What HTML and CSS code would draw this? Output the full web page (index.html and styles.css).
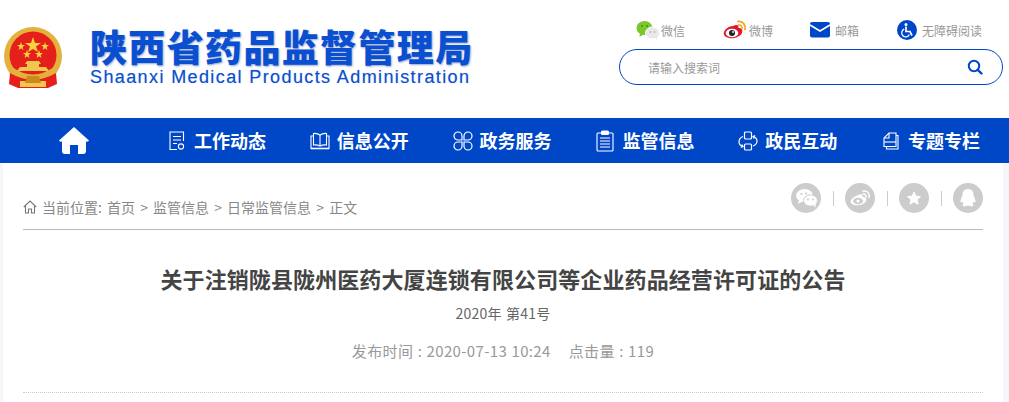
FILE: index.html
```html
<!DOCTYPE html>
<html lang="zh-CN">
<head>
<meta charset="utf-8">
<title>关于注销陇县陇州医药大厦连锁有限公司等企业药品经营许可证的公告</title>
<link rel="stylesheet" href="styles.css">
</head>
<body>
<header class="top">
  <div class="brand">
    <svg class="emblem" viewBox="0 0 60 64" width="60" height="64">
      <circle cx="30" cy="30" r="29" fill="#e3b23c"/>
      <circle cx="30" cy="29" r="23.5" fill="#e5201a"/>
      <polygon points="30,11 32,17 38,17 33,20.5 35,26 30,23 25,26 27,20.5 22,17 28,17" fill="#f6d23f"/>
      <polygon points="18,16 19,19 22,19 19.6,21 20.4,24 18,22.2 15.6,24 16.4,21 14,19 17,19" fill="#f6d23f"/>
      <polygon points="42,16 43,19 46,19 43.6,21 44.4,24 42,22.2 39.6,24 40.4,21 38,19 41,19" fill="#f6d23f"/>
      <polygon points="24,24 25,27 28,27 25.6,29 26.4,32 24,30.2 21.6,32 22.4,29 20,27 23,27" fill="#f6d23f"/>
      <polygon points="36,24 37,27 40,27 37.6,29 38.4,32 36,30.2 33.6,32 34.4,29 32,27 35,27" fill="#f6d23f"/>
      <path d="M24 35 H36 L38 38 H36 V41 H43 L46 45 H14 L17 41 H24 V38 H22 Z" fill="#efc64e"/>
      <path d="M7 47 L6 58 L15 62 H45 L54 58 L53 47 Q30 60 7 47 Z" fill="#e5201a"/>
      <path d="M9 41 Q30 56 51 41 L54 46 Q30 61 6 46 Z" fill="#e3b23c"/>
      <path d="M17 55 H43 V61 H17 Z" fill="#efc64e"/>
      <path d="M24 50 H36 L38 57 H22 Z" fill="#c98a1e"/>
    </svg>
    <div class="brand-text">
      <div class="brand-cn">陕西省药品监督管理局</div>
      <div class="brand-en">Shaanxi Medical Products Administration</div>
    </div>
  </div>
  <div class="tools">
    <ul class="links">
      <li class="link link-wx">
        <svg viewBox="0 0 24 20" width="24" height="20">
          <ellipse cx="8.5" cy="8" rx="8" ry="7" fill="#7cc62d"/>
          <path d="M4 13 L3.5 17 L8 14 Z" fill="#7cc62d"/>
          <circle cx="6" cy="6" r="1" fill="#3f8f10"/><circle cx="11" cy="6" r="1" fill="#3f8f10"/>
          <ellipse cx="16.5" cy="13" rx="7" ry="6" fill="#e8e8e8" stroke="#fff" stroke-width="1"/>
          <path d="M19 17.5 L21 20 L21 16 Z" fill="#e8e8e8"/>
          <circle cx="14.5" cy="12" r=".9" fill="#bbb"/><circle cx="18.5" cy="12" r=".9" fill="#bbb"/>
        </svg>
        <span>微信</span>
      </li>
      <li class="link link-wb">
        <svg viewBox="0 0 24 20" width="24" height="20">
          <path d="M10 6 C14 4 16 5 15.5 8 C19 8 20 10 19 13 C17 17 11 19 6 18 C2 17 0 15 1 12 C2 9 6 6 10 6 Z" fill="#e6162d"/>
          <ellipse cx="9" cy="13" rx="6.3" ry="4.3" fill="#fff"/>
          <circle cx="9" cy="13" r="3" fill="#222"/>
          <circle cx="10" cy="12" r=".9" fill="#fff"/>
          <path d="M15 1.5 C20 1 23 5 22 9.5" fill="none" stroke="#f5a623" stroke-width="1.8" stroke-linecap="round"/>
          <path d="M15.5 5 C18 4.7 19.5 6.5 19 9" fill="none" stroke="#f5a623" stroke-width="1.6" stroke-linecap="round"/>
        </svg>
        <span>微博</span>
      </li>
      <li class="link link-mail">
        <svg viewBox="0 0 20 16" width="20" height="16">
          <rect width="20" height="15.5" rx="2" fill="#0047c8"/>
          <path d="M0 3 L10 9 L20 3" fill="none" stroke="#fff" stroke-width="1.8"/>
        </svg>
        <span>邮箱</span>
      </li>
      <li class="link link-acc">
        <svg viewBox="0 0 20 20" width="20" height="20">
          <circle cx="10" cy="10" r="10" fill="#0047c8"/>
          <circle cx="9" cy="4.5" r="1.5" fill="#fff"/>
          <path d="M9 6.5 V11.5 H13 L15 15.5" fill="none" stroke="#fff" stroke-width="1.7"/>
          <path d="M7.2 9.2 A4 4 0 1 0 12.4 14.4" fill="none" stroke="#fff" stroke-width="1.3"/>
        </svg>
        <span>无障碍阅读</span>
      </li>
    </ul>
    <div class="search">
      <span class="search-hint">请输入搜索词</span>
      <svg viewBox="0 0 16 16" width="16" height="16">
        <circle cx="7" cy="7" r="5.2" fill="none" stroke="#0047c8" stroke-width="2"/>
        <path d="M10.8 10.8 L14.5 14.5" stroke="#0047c8" stroke-width="2.4" stroke-linecap="round"/>
      </svg>
    </div>
  </div>
</header>

<nav class="nav">
  <a class="nav-home">
    <svg viewBox="0 0 30 27" width="30" height="27">
      <path d="M15 0 L30 13.5 Q29.5 15 27 14.5 V24 Q27 27 24 27 H19 V18 H11 V27 H6 Q3 27 3 24 V14.5 Q.5 15 0 13.5 Z" fill="#fff"/>
    </svg>
  </a>
  <a class="nav-item">
    <span class="nav-icon">
      <svg viewBox="0 0 16 20" width="16" height="20" fill="none" stroke="#fff" stroke-width="1.1">
        <path d="M8 18.5 H1 V1 H14.5 V10"/><path d="M4 5.5 H12 M4 9 H12 M4 12.5 H8"/><circle cx="12" cy="15.5" r="2.6"/>
      </svg>
    </span>
    <span class="nav-label">工作动态</span>
  </a>
  <a class="nav-item">
    <span class="nav-icon">
      <svg viewBox="0 0 20 18" width="20" height="18" fill="none" stroke="#fff" stroke-width="1.1">
        <path d="M10 14 Q7 12.5 3.5 13 V1.5 Q7 1 10 3 Q13 1 16.500 1.500 V13 Q13 12.500 10 14 Z"/><path d="M10 3 V14"/><path d="M3.500 4 H1 V16.500 H19 V4 H16.500"/><path d="M1 16.500 H19" stroke-width="1.6"/>
      </svg>
    </span>
    <span class="nav-label">信息公开</span>
  </a>
  <a class="nav-item">
    <span class="nav-icon">
      <svg viewBox="0 0 20 20" width="20" height="20" fill="none" stroke="#fff" stroke-width="1.2">
        <path d="M1 5 A4 4 0 0 1 9 5 V9 H5 A4 4 0 0 1 1 5 Z"/>
        <path d="M11 5 A4 4 0 0 1 19 5 A4 4 0 0 1 15 9 H11 Z"/>
        <path d="M1 15 A4 4 0 0 1 5 11 H9 V15 A4 4 0 0 1 1 15 Z"/>
        <path d="M11 11 H15 A4 4 0 0 1 19 15 A4 4 0 0 1 11 15 Z"/>
      </svg>
    </span>
    <span class="nav-label">政务服务</span>
  </a>
  <a class="nav-item">
    <span class="nav-icon">
      <svg viewBox="0 0 18 22" width="18" height="22" fill="none" stroke="#fff" stroke-width="1.1">
        <path d="M5 3 H2 Q1 3 1 4 V20 Q1 21 2 21 H16 Q17 21 17 20 V4 Q17 3 16 3 H13"/>
        <rect x="5.500" y="1" width="7" height="3.500" rx="1" fill="#fff"/>
        <path d="M4 8 H14 M4 11 H14 M4 14 H14 M4 17 H14"/>
      </svg>
    </span>
    <span class="nav-label">监管信息</span>
  </a>
  <a class="nav-item">
    <span class="nav-icon">
      <svg viewBox="0 0 20 20" width="20" height="20" fill="none" stroke="#fff" stroke-width="1.2">
        <rect x="6.500" y="1" width="7" height="7" rx="1"/><rect x="6.500" y="13" width="7" height="6" rx="1"/>
        <path d="M5 5.500 Q1 7 1 11 Q1 14 4.500 15.500 M2.800 16.500 L5 15.500 L3.800 13.500"/>
        <path d="M15 15 Q19 13.500 19 10 Q19 7 15.500 5.500 M17.200 4.500 L15 5.500 L16.200 7.500"/>
      </svg>
    </span>
    <span class="nav-label">政民互动</span>
  </a>
  <a class="nav-item">
    <span class="nav-icon">
      <svg viewBox="0 0 16 18" width="16" height="18" fill="none" stroke="#fff" stroke-width="1.1">
        <path d="M6 1 H13 V14.500 H1 V6 Z"/><path d="M1 6 H6 V1"/><path d="M1 10 H13"/><path d="M13 3.500 H15 V17 H3.500 V14.500"/>
      </svg>
    </span>
    <span class="nav-label">专题专栏</span>
  </a>
</nav>

<main class="page">
  <div class="crumbs">
    <div class="crumb-path">
      <svg viewBox="0 0 14 14" width="14" height="14" fill="none" stroke="#777" stroke-width="1.1">
        <path d="M.8 7 L7 1 L13.2 7"/><path d="M2.500 6 V13 H5.500 V9 H8.500 V13 H11.500 V6"/>
      </svg>
      <span>当前位置: 首页 &gt; 监管信息 &gt; 日常监管信息 &gt; 正文</span>
    </div>
    <div class="share">
      <span class="share-btn">
        <svg viewBox="0 0 30 30" width="30" height="30" fill="#fff">
          <ellipse cx="13.500" cy="12.500" rx="8.500" ry="6.500"/><path d="M8 17 L7 21 L12.500 18 Z"/>
          <ellipse cx="19.500" cy="17.500" rx="7" ry="5.700" stroke="#ccc" stroke-width="1"/>
          <path d="M22 22 L24.500 24.500 L24.500 20 Z"/>
          <circle cx="10.500" cy="11" r="1.100" fill="#ccc"/><circle cx="15" cy="10.500" r="1.100" fill="#ccc"/>
          <circle cx="17" cy="16.500" r="1" fill="#ccc"/><circle cx="22" cy="16.500" r="1" fill="#ccc"/>
        </svg>
      </span>
      <i class="sep"></i>
      <span class="share-btn">
        <svg viewBox="0 0 30 30" width="30" height="30">
          <path d="M13 12 C17 10 18 12 17.500 14 C21 14 22 16 21 18 C19 22 13 23 9 22 C6 21 5 19 6 17 C7 15 10 13 13 12 Z" fill="#fff"/>
          <ellipse cx="13" cy="18" rx="5" ry="3.200" fill="#ccc"/>
          <circle cx="13" cy="18" r="1.600" fill="#fff"/>
          <path d="M18 8 C22 7.500 25 10 24 14.500 M18 11 C20 10.700 21.500 12 21 14" fill="none" stroke="#fff" stroke-width="1.400" stroke-linecap="round"/>
        </svg>
      </span>
      <i class="sep"></i>
      <span class="share-btn">
        <svg viewBox="0 0 30 30" width="30" height="30">
          <polygon points="15,9 16.900,13.200 21.500,13.600 18,16.700 19.100,21.200 15,18.800 10.900,21.200 12,16.700 8.500,13.600 13.100,13.200" fill="#fff" stroke="#fff" stroke-width="1" stroke-linejoin="round"/>
        </svg>
      </span>
      <i class="sep"></i>
      <span class="share-btn">
        <svg viewBox="0 0 30 30" width="30" height="30">
          <path d="M15 6 C19 6 20.500 9 20.500 12 C20.500 13 22.500 16 22.500 18.500 C22.500 20 21 19.500 20.500 18.500 C20 20 19.500 20.500 19.500 21 C20.500 21.500 21 22 20 23 C18 23.500 16 23 15 22.500 C14 23 12 23.500 10 23 C9 22 9.500 21.500 10.500 21 C10.500 20.500 10 20 9.500 18.500 C9 19.500 7.500 20 7.500 18.500 C7.500 16 9.500 13 9.500 12 C9.500 9 11 6 15 6 Z" fill="#fff"/>
        </svg>
      </span>
    </div>
  </div>
  <article class="article">
    <h1 class="title">关于注销陇县陇州医药大厦连锁有限公司等企业药品经营许可证的公告</h1>
    <p class="docno">2020年 第41号</p>
    <p class="meta"><span>发布时间 : 2020-07-13 10:24</span><span>点击量 : 119</span></p>
  </article>
</main>
</body>
</html>
```

FILE: styles.css
```css
* { box-sizing: border-box; }
html, body { margin: 0; padding: 0; }
body {
  height: 402px;
  overflow: hidden;
  background: #f5f6fa;
  font-family: "Noto Sans CJK SC", "Liberation Sans", sans-serif;
}

.top {
  height: 118px;
  background: #fff;
  display: flex;
  justify-content: space-between;
}
.brand { display: flex; align-items: flex-start; padding: 26px 0 0 3px; }
.emblem { display: block; }
.brand-text { margin-left: 27px; }
.brand-cn {
  font-size: 37px;
  line-height: 40px;
  height: 40px;
  font-weight: 900;
  letter-spacing: 1.35px;
  color: #0a4fd0;
  text-shadow: 1px 1px 2px rgba(20, 60, 160, .45);
  white-space: nowrap;
}
.brand-en {
  font-family: "Liberation Sans", sans-serif;
  font-size: 18px;
  line-height: 20px;
  letter-spacing: 1.39px;
  color: #0a4fd0;
  white-space: nowrap;
  margin-top: 1px;
  text-shadow: 0 0 1px rgba(20, 60, 160, .35);
}

.tools { width: 390px; padding: 20px 6px 0 0; }
.links {
  list-style: none;
  margin: 0;
  padding: 0 0 0 17px;
  display: grid;
  grid-template-columns: 87px 87px 87px auto;
  height: 20px;
}
.link { display: flex; align-items: center; font-size: 12px; color: #999; white-space: nowrap; }
.link-wx span { margin-left: 1px; }
.link-wb span { margin-left: 2px; }
.link-mail span { margin-left: 5px; }
.link-acc span { margin-left: 5px; }
.search {
  margin-top: 9px;
  width: 384px;
  height: 36px;
  border: 1.5px solid #0047c8;
  border-radius: 18px;
  display: flex;
  align-items: center;
  justify-content: space-between;
  padding: 0 19px 0 28px;
}
.search-hint { font-size: 12px; color: #999; }

.nav {
  height: 45px;
  background: #0047c8;
  display: grid;
  grid-template-columns: 160px repeat(6, 142.8px);
  align-items: center;
}
.nav-home { display: flex; justify-content: center; padding-right: 12px; }
.nav-item {
  display: flex;
  align-items: center;
  color: #fff;
  font-size: 18px;
  font-weight: 700;
  line-height: 24px;
  white-space: nowrap;
}
.nav-label { padding-bottom: 2px; }
.nav-icon { width: 34px; display: flex; justify-content: center; }
.nav-icon svg, .nav-home svg { display: block; }

.page {
  margin: 0 6px 0 3px;
  height: 239px;
  background: #fff;
  padding: 20px 20px 0;
}
.crumbs {
  height: 47px;
  border-bottom: 1px solid #bbb;
  display: flex;
  justify-content: space-between;
  align-items: flex-start;
}
.crumb-path {
  display: flex;
  align-items: center;
  gap: 5px;
  margin-top: 14px;
  font-size: 14px;
  line-height: 20px;
  color: #888;
  white-space: nowrap;
  word-spacing: 2px;
}
.share { display: flex; align-items: center; }
.share-btn { width: 30px; height: 30px; border-radius: 50%; background: #ccc; display: block; }
.share-btn svg { display: block; }
.sep { width: 1px; height: 15px; background: #ccc; margin: 0 11.5px; display: block; }

.article {
  height: 163px;
  border-bottom: 1px dotted #ccc;
  text-align: center;
  padding-top: 32px;
}
.title {
  margin: 0;
  font-size: 22px;
  line-height: 32px;
  font-weight: 700;
  color: #444;
  white-space: nowrap;
  letter-spacing: .1px;
}
.docno { margin: 8px 0 0; font-size: 14px; line-height: 22px; color: #666; letter-spacing: .2px; word-spacing: 1px; }
.meta {
  margin: 16px 0 0;
  font-size: 15px;
  line-height: 22px;
  color: #999;
  display: flex;
  justify-content: center;
  gap: 18px;
  letter-spacing: .35px;
  word-spacing: .7px;
}
```
